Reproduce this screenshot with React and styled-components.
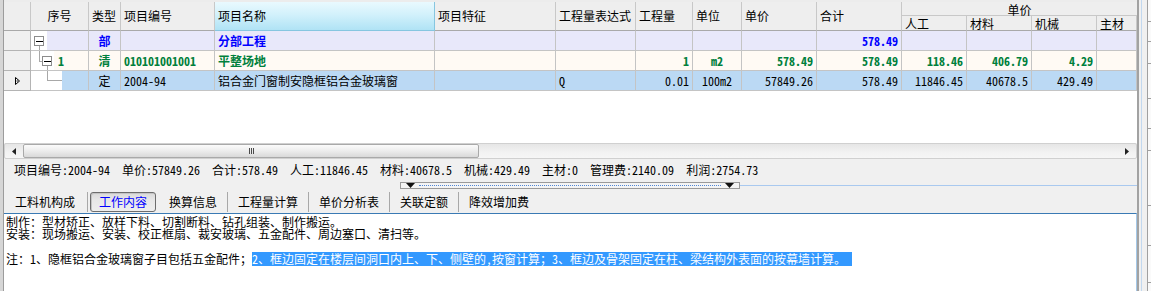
import React from 'react';
import styled, { createGlobalStyle } from 'styled-components';

const GlobalStyle = createGlobalStyle`
  html, body { margin: 0; padding: 0; background: #f0f0f0; }
  body {
    font-family: "Noto Sans CJK SC", "Liberation Sans", sans-serif;
    font-size: 12px;
    color: #000;
    font-feature-settings: "hwid" 1;
  }
  #root { width: 1151px; height: 291px; overflow: hidden; }
`;

const COLS = [27, 58, 32, 94, 220, 121, 80, 57, 49, 75, 85, 65, 65, 65, 40];

const TONES = {
  dept: { bg: '#e8e8fa', color: '#0000ff', weight: 700 },
  item: { bg: '#fffaf4', color: '#00803c', weight: 700 },
  quota: { bg: '#bbd9f4', color: '#000000', weight: 400 },
};

const Window = styled.div`
  display: flex;
  width: 1151px;
  height: 291px;
  overflow: hidden;
`;

const LeftEdge = styled.div`
  flex: none;
  width: 3px;
  background: #d6d6d6;
  border-right: 1px solid #9c9c9c;
`;

const Main = styled.div`
  flex: none;
  width: 1133px;
  display: flex;
  flex-direction: column;
`;

const GridArea = styled.div`
  height: 143px;
  box-sizing: border-box;
  background: #fff;
  border-top: 2px solid #ececec;
  overflow: hidden;
`;

const Table = styled.div`
  display: grid;
  grid-template-columns: ${COLS.map((c) => c + 'px').join(' ')};
  grid-template-rows: 14px 15px repeat(3, 20px);
`;

const HeadCell = styled.div`
  grid-row: span 2;
  display: flex;
  align-items: center;
  justify-content: ${(p) => (p.$center ? 'center' : 'flex-start')};
  padding-left: ${(p) => (p.$center ? 0 : 3)}px;
  box-sizing: border-box;
  background: ${(p) =>
    p.$focus
      ? 'linear-gradient(180deg, #e9f9fe 0%, #d2f1fb 45%, #b0e3f5 100%)'
      : '#eeeeee'};
  border-right: 1px solid ${(p) => (p.$focus ? '#86c6e0' : '#c8c8c8')};
  border-bottom: 1px solid ${(p) => (p.$focus ? '#86c6e0' : '#a9a9a9')};
  line-height: 14px;
  white-space: nowrap;
`;

const GroupHead = styled.div`
  grid-column: span 4;
  display: flex;
  align-items: center;
  justify-content: center;
  background: #eeeeee;
  border-bottom: 1px solid #c8c8c8;
  line-height: 13px;
  padding-top: 1px;
`;

const SubHead = styled.div`
  display: flex;
  align-items: center;
  padding: 1px 0 0 3px;
  box-sizing: border-box;
  background: #eeeeee;
  border-right: 1px solid #c8c8c8;
  border-bottom: 1px solid #a9a9a9;
  line-height: 13px;
  white-space: nowrap;
`;

const Indicator = styled.div`
  display: flex;
  align-items: center;
  padding-left: 11px;
  box-sizing: border-box;
  background: #f0f0f0;
  border-right: 1px solid #b4b4b4;
  border-bottom: 1px solid #b4b4b4;
`;

const Cell = styled.div`
  box-sizing: border-box;
  padding: 0 3px;
  background: ${(p) => TONES[p.$tone].bg};
  color: ${(p) => TONES[p.$tone].color};
  font-weight: ${(p) => TONES[p.$tone].weight};
  text-align: ${(p) => p.$align};
  border-right: 1px solid #c4c4c4;
  border-bottom: 1px solid #c4c4c4;
  line-height: 19px;
  white-space: nowrap;
  overflow: hidden;
`;

const TreeCell = styled.div`
  display: flex;
  box-sizing: border-box;
  background: ${(p) => TONES[p.$tone].bg};
  color: ${(p) => TONES[p.$tone].color};
  font-weight: ${(p) => TONES[p.$tone].weight};
  border-right: 1px solid #c4c4c4;
  border-bottom: 1px solid #c4c4c4;
  line-height: 19px;
`;

const TreeGutter = styled.svg`
  flex: none;
  display: block;
  background: #fff;
`;

const TreeLabel = styled.span`
  padding-left: 4px;
`;

const HScroll = styled.div`
  height: 16px;
  display: flex;
  box-sizing: border-box;
  background: linear-gradient(180deg, #e6e6e6 0%, #f2f2f2 60%, #f6f6f6 100%);
  border: 1px solid #d0d0d0;
  border-radius: 2px;
`;

const ScrollBtn = styled.div`
  flex: none;
  width: 18px;
  display: flex;
  align-items: center;
  justify-content: center;
`;

const Thumb = styled.div`
  flex: none;
  width: 456px;
  box-sizing: border-box;
  background: linear-gradient(180deg, #fbfbfb 0%, #ececec 50%, #d9d9d9 100%);
  border: 1px solid #a9a9a9;
  border-radius: 2px;
  display: flex;
  align-items: center;
  justify-content: center;
`;

const Grip = styled.span`
  width: 5px;
  height: 6px;
  background: repeating-linear-gradient(90deg, #4a4a4a 0 1px, transparent 1px 2px);
`;

const Track = styled.div`
  flex: 1;
`;

const StatusBar = styled.div`
  height: 21px;
  display: flex;
  align-items: center;
  gap: 12px;
  padding-left: 10px;
  white-space: nowrap;
`;

const SplitRow = styled.div`
  height: 10px;
  display: flex;
  align-items: center;
`;

const SplitGap = styled.div`
  flex: none;
  width: 396px;
`;

const SplitHandle = styled.div`
  flex: none;
  width: 340px;
  height: 7px;
  box-sizing: border-box;
  border: 1px solid #9a9a9a;
  background: #f4f4f4;
  display: flex;
  align-items: center;
  gap: 4px;
  padding: 0 5px;
`;

const Dotted = styled.div`
  flex: 1;
  border-top: 1px dotted #4f86d6;
`;

const BlueRule = styled.div`
  flex: 1;
  height: 1px;
  background: #a9c9ef;
`;

const Tabs = styled.div`
  height: 23px;
  display: flex;
  align-items: center;
`;

const Tab = styled.div`
  height: 20px;
  line-height: 20px;
  box-sizing: border-box;
  white-space: nowrap;
  ${(p) =>
    p.$active
      ? `
    margin: 0 1px 0 2px;
    padding: 0 8px;
    color: #0000ff;
    border: 1px solid #6d6d6d;
    border-radius: 3px;
    line-height: 18px;
    background: linear-gradient(180deg, #d9d9d9 0%, #e8e8e8 40%, #eeeeee 100%);
    box-shadow: inset 1px 1px 0 #c4c4c4;
  `
      : `
    padding: 0 ${p.$first ? 12 : 10}px 0 ${p.$first ? 11 : p.$afterActive ? 12 : 10}px;
    border-right: 1px solid #a8a8a8;
    &:last-child { border-right: none; }
  `}
`;

const Notes = styled.div`
  flex: 1;
  background: #fff;
  border-top: 1px solid #3a7ab4;
  border-right: 1px solid #a4c8e8;
  padding: 2px 2px 0;
  white-space: nowrap;
  overflow: hidden;
`;

const NoteLine = styled.div`
  line-height: 12px;
`;

const NoteRemark = styled.div`
  line-height: 14px;
  margin-top: 12px;
`;

const Selected = styled.span`
  display: inline-block;
  line-height: 14px;
  background: #3399ff;
  color: #fff;
  padding-right: 6px;
`;

const SideStrip = styled.div`
  flex: none;
  width: 14px;
  display: flex;
  box-sizing: border-box;
  border-left: 2px solid #a2a2a2;
`;

const SideBand = styled.div`
  flex: none;
  width: ${(p) => p.$w}px;
  background: ${(p) => p.$c};
`;

const SideTicks = styled.div`
  flex: 1;
  display: flex;
  flex-direction: column;
  background: #fafafa;
`;

const Tick = styled.div`
  height: 1px;
  margin-top: ${(p) => p.$gap}px;
  background: #a0a0a0;
`;

const rows = [
  {
    tone: 'dept',
    tree: 'dept',
    label: '',
    cells: ['部', '', '分部工程', '', '', '', '', '', '578.49', '', '', '', ''],
  },
  {
    tone: 'item',
    tree: 'item',
    label: '1',
    cells: ['清', '010101001001', '平整场地', '', '', '1', 'm2', '578.49', '578.49', '118.46', '406.79', '4.29', ''],
  },
  {
    tone: 'quota',
    tree: 'quota',
    label: '',
    current: true,
    cells: ['定', '2004-94', '铝合金门窗制安隐框铝合金玻璃窗', '', 'Q', '0.01', '100m2', '57849.26', '578.49', '11846.45', '40678.5', '429.49', ''],
  },
];

const ALIGNS = ['center', 'left', 'left', 'left', 'left', 'right', 'center', 'right', 'right', 'right', 'right', 'right', 'right'];

const Box = ({ x }) => (
  <>
    <rect x={x + 0.5} y="5.5" width="9" height="9" fill="#fff" stroke="#8c8c8c" />
    <line x1={x + 2} y1="10.5" x2={x + 9} y2="10.5" stroke="#000" />
  </>
);

const TreeArt = ({ kind }) => {
  if (kind === 'dept') {
    return (
      <TreeGutter width="16" height="19" viewBox="0 0 16 19">
        <line x1="8.5" y1="15" x2="8.5" y2="19" stroke="#a8a8a8" />
        <Box x={3} />
      </TreeGutter>
    );
  }
  if (kind === 'item') {
    return (
      <TreeGutter width="23" height="19" viewBox="0 0 23 19">
        <line x1="8.5" y1="0" x2="8.5" y2="10.5" stroke="#a8a8a8" />
        <line x1="8" y1="10.5" x2="11" y2="10.5" stroke="#a8a8a8" />
        <line x1="16.5" y1="15" x2="16.5" y2="19" stroke="#a8a8a8" />
        <Box x={11} />
      </TreeGutter>
    );
  }
  return (
    <TreeGutter width="31" height="19" viewBox="0 0 31 19">
      <line x1="16.5" y1="0" x2="16.5" y2="9.5" stroke="#a8a8a8" />
      <line x1="16" y1="9.5" x2="31" y2="9.5" stroke="#a8a8a8" />
    </TreeGutter>
  );
};

const CurrentMark = () => (
  <svg width="6" height="8" viewBox="0 0 6 8">
    <path d="M0.5 0.5 L4.5 4 L0.5 7.5 Z" fill="#fff" stroke="#000" />
    <line x1="1.5" y1="4" x2="3" y2="4" stroke="#000" />
  </svg>
);

const Arrow = ({ dir }) => (
  <svg width="4" height="7" viewBox="0 0 4 7">
    {dir === 'left' ? <path d="M4 0 L0 3.5 L4 7 Z" fill="#222" /> : <path d="M0 0 L4 3.5 L0 7 Z" fill="#222" />}
  </svg>
);

const Down = () => (
  <svg width="9" height="5" viewBox="0 0 9 5">
    <path d="M0 0 L9 0 L4.5 5 Z" fill="#111" />
  </svg>
);

const status = [
  '项目编号:2004-94',
  '单价:57849.26',
  '合计:578.49',
  '人工:11846.45',
  '材料:40678.5',
  '机械:429.49',
  '主材:0',
  '管理费:2140.09',
  '利润:2754.73',
];

const tabs = ['工料机构成', '工作内容', '换算信息', '工程量计算', '单价分析表', '关联定额', '降效增加费'];

const headers = ['', '序号', '类型', '项目编号', '项目名称', '项目特征', '工程量表达式', '工程量', '单位', '单价', '合计'];

const ticks = [21, 19, 21, 34, 29, 21, 54, 39, 36];

export default function App() {
  return (
    <>
      <GlobalStyle />
      <Window>
        <LeftEdge />
        <Main>
          <GridArea>
            <Table>
              {headers.map((h, i) => (
                <HeadCell key={i} $center={i === 1} $focus={i === 4}>
                  {h}
                </HeadCell>
              ))}
              <GroupHead>单价</GroupHead>
              {['人工', '材料', '机械', '主材'].map((h) => (
                <SubHead key={h}>{h}</SubHead>
              ))}
              {rows.map((r, ri) => (
                <React.Fragment key={ri}>
                  <Indicator>{r.current && <CurrentMark />}</Indicator>
                  <TreeCell $tone={r.tone}>
                    <TreeArt kind={r.tree} />
                    {r.label && <TreeLabel>{r.label}</TreeLabel>}
                  </TreeCell>
                  {r.cells.map((c, ci) => (
                    <Cell key={ci} $tone={r.tone} $align={ALIGNS[ci]}>
                      {c}
                    </Cell>
                  ))}
                </React.Fragment>
              ))}
            </Table>
          </GridArea>
          <HScroll>
            <ScrollBtn>
              <Arrow dir="left" />
            </ScrollBtn>
            <Thumb>
              <Grip />
            </Thumb>
            <Track />
            <ScrollBtn>
              <Arrow dir="right" />
            </ScrollBtn>
          </HScroll>
          <StatusBar>
            {status.map((s) => (
              <span key={s}>{s}</span>
            ))}
          </StatusBar>
          <SplitRow>
            <SplitGap />
            <SplitHandle>
              <Down />
              <Dotted />
              <Down />
            </SplitHandle>
            <BlueRule />
          </SplitRow>
          <Tabs>
            {tabs.map((t, i) => (
              <Tab key={t} $active={i === 1} $first={i === 0} $afterActive={i === 2}>
                {t}
              </Tab>
            ))}
          </Tabs>
          <Notes>
            <NoteLine>制作：型材矫正、放样下料、切割断料、钻孔组装、制作搬运。</NoteLine>
            <NoteLine>安装：现场搬运、安装、校正框扇、裁安玻璃、五金配件、周边塞口、清扫等。</NoteLine>
            <NoteRemark>
              注：1、隐框铝合金玻璃窗子目包括五金配件；
              <Selected>2、框边固定在楼层间洞口内上、下、侧壁的，按窗计算；3、框边及骨架固定在柱、梁结构外表面的按幕墙计算。</Selected>
            </NoteRemark>
          </Notes>
        </Main>
        <SideStrip>
          <SideBand $w={2} $c="#f0f0f0" />
          <SideBand $w={1} $c="#c2d8ef" />
          <SideBand $w={5} $c="#f0f0f0" />
          <SideBand $w={1} $c="#a0a0a0" />
          <SideTicks>
            {ticks.map((g, i) => (
              <Tick key={i} $gap={g} />
            ))}
          </SideTicks>
        </SideStrip>
      </Window>
    </>
  );
}
